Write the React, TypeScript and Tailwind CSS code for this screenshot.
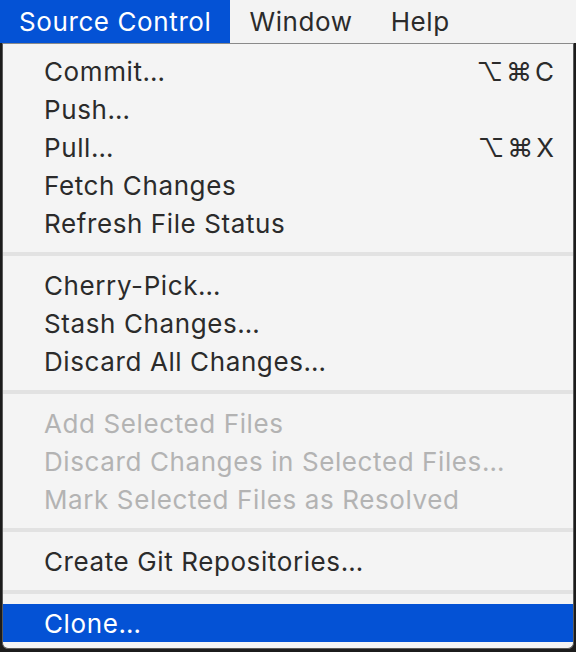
type Item = { label: string; shortcut?: string; disabled?: boolean; selected?: boolean };

const groups: Item[][] = [
  [
    { label: 'Commit…', shortcut: '⌥⌘C' },
    { label: 'Push…' },
    { label: 'Pull…', shortcut: '⌥⌘X' },
    { label: 'Fetch Changes' },
    { label: 'Refresh File Status' },
  ],
  [{ label: 'Cherry-Pick…' }, { label: 'Stash Changes…' }, { label: 'Discard All Changes…' }],
  [
    { label: 'Add Selected Files', disabled: true },
    { label: 'Discard Changes in Selected Files…', disabled: true },
    { label: 'Mark Selected Files as Resolved', disabled: true },
  ],
  [{ label: 'Create Git Repositories…' }],
  [{ label: 'Clone…', selected: true }],
];

function MenuRow({ item }: { item: Item }) {
  const color = item.selected ? 'bg-[#0452d5] text-white' : item.disabled ? 'text-[#b3b3b3]' : 'text-[#2b2b2b]';
  return (
    <div className={`flex h-[38px] items-center justify-between pl-[41px] pr-[16px] ${color}`}>
      <span>{item.label}</span>
      {item.shortcut && <span className="tracking-[3px]">{item.shortcut}</span>}
    </div>
  );
}

export default function App() {
  return (
    <div className="h-[652px] w-[576px] overflow-hidden bg-[#1c1c1c] text-[26px] tracking-[0.6px] font-['Inter','DejaVu_Sans',sans-serif]">
      {/* Menu bar */}
      <div className="flex h-[43px] items-center bg-[#f3f3f3] text-[#2b2b2b]">
        <div className="flex h-full items-center bg-[#0452d5] px-[19px] text-white">Source Control</div>
        <div className="px-[19px]">Window</div>
        <div className="px-[19px]">Help</div>
      </div>

      {/* Dropdown */}
      <div className="mx-[2px] h-[606px] rounded-b-[6px] border border-t-[#8a8a8a] border-x-[#5a5a5a] border-b-[#5a5a5a] bg-[#f4f4f4] pt-[8px]">
        {groups.map((g, gi) => (
          <div key={gi}>
            {gi > 0 && <div className="my-[10px] h-[4px] bg-[#e2e2e2]" />}
            {g.map((item) => (
              <MenuRow key={item.label} item={item} />
            ))}
          </div>
        ))}
      </div>
    </div>
  );
}
